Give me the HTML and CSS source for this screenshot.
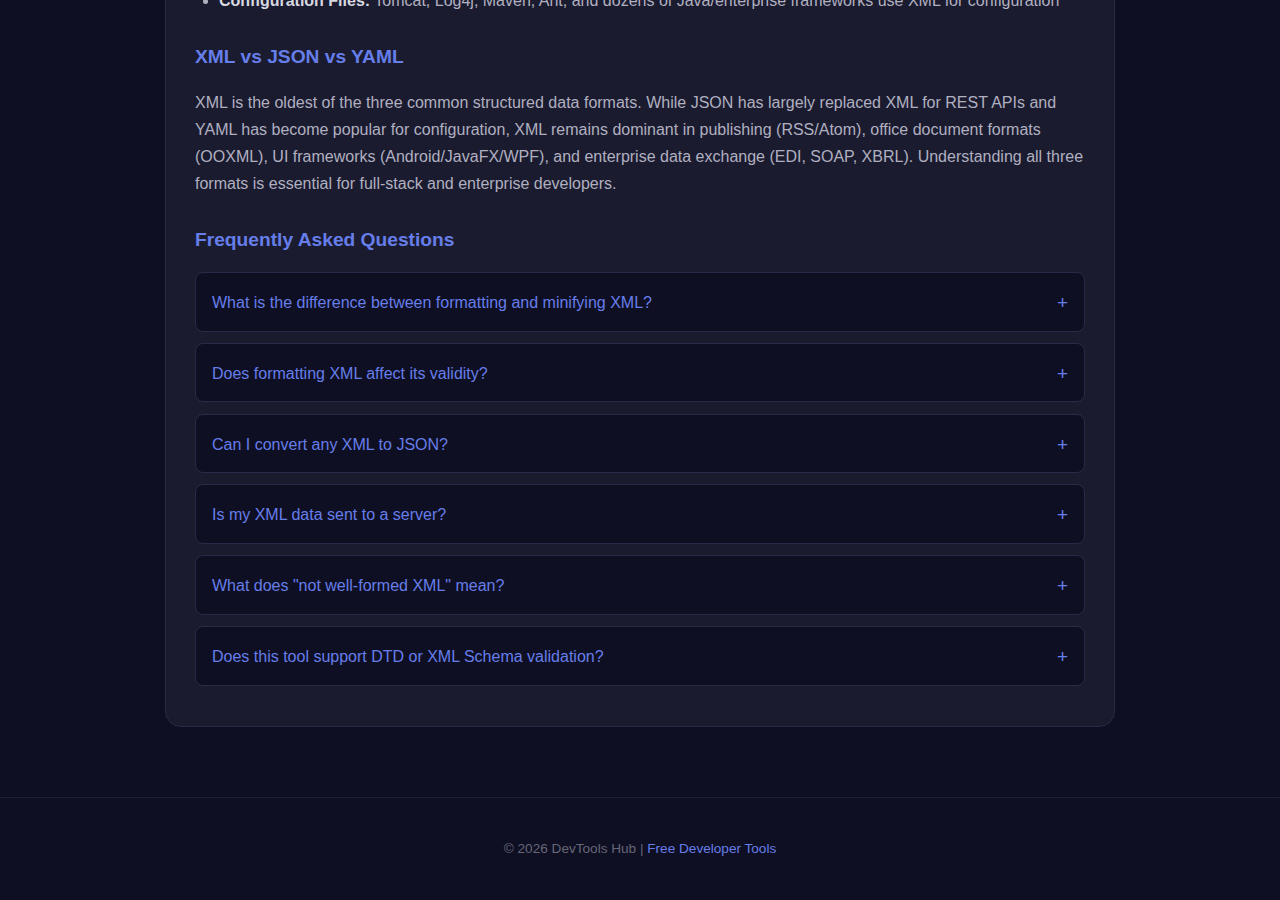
FILE: index.html
```
<!DOCTYPE html>
<html lang="en">
<head>
  <meta charset="UTF-8" />
  <meta name="viewport" content="width=device-width, initial-scale=1" />
  <title>XML Formatter - DevTools Hub</title>
  <link rel="stylesheet" href="styles.css">
</head>
<body>

  <main class="page">
    <section class="content-card">
      <ul class="uses">
        <li><strong>Configuration Files:</strong> Tomcat, Log4j, Maven, Ant, and dozens of Java/enterprise frameworks use XML for configuration</li>
      </ul>

      <h2>XML vs JSON vs YAML</h2>
      <p>XML is the oldest of the three common structured data formats. While JSON has largely replaced XML for REST APIs and YAML has become popular for configuration, XML remains dominant in publishing (RSS/Atom), office document formats (OOXML), UI frameworks (Android/JavaFX/WPF), and enterprise data exchange (EDI, SOAP, XBRL). Understanding all three formats is essential for full-stack and enterprise developers.</p>

      <h2>Frequently Asked Questions</h2>
      <div class="faq-list">
        <div class="faq-item">
          <span class="faq-question">What is the difference between formatting and minifying XML?</span>
          <span class="faq-toggle">+</span>
        </div>
        <div class="faq-item">
          <span class="faq-question">Does formatting XML affect its validity?</span>
          <span class="faq-toggle">+</span>
        </div>
        <div class="faq-item">
          <span class="faq-question">Can I convert any XML to JSON?</span>
          <span class="faq-toggle">+</span>
        </div>
        <div class="faq-item">
          <span class="faq-question">Is my XML data sent to a server?</span>
          <span class="faq-toggle">+</span>
        </div>
        <div class="faq-item">
          <span class="faq-question">What does "not well-formed XML" mean?</span>
          <span class="faq-toggle">+</span>
        </div>
        <div class="faq-item">
          <span class="faq-question">Does this tool support DTD or XML Schema validation?</span>
          <span class="faq-toggle">+</span>
        </div>
      </div>
    </section>
  </main>

  <footer>
    <p>&copy; 2026 DevTools Hub | <a href="index.html">Free Developer Tools</a></p>
  </footer>

</body>
</html>
```
FILE: styles.css
```
* {
  box-sizing: border-box;
  margin: 0;
  padding: 0;
}

body {
  font-family: 'Liberation Sans', Arial, sans-serif;
  background-color: #0f0f23;
  color: #b0b0c0;
}

.page {
  margin-top: -44px;
  padding: 0 0 70px;
}

.content-card {
  max-width: 950px;
  margin: 0 auto;
  background-color: #1b1b2f;
  border: 1px solid #2a2a48;
  border-radius: 16px;
  padding: 30px 29px 40px;
}

.uses {
  list-style: disc;
  padding-left: 24px;
  margin-bottom: 16px;
}

.uses li {
  font-size: 16px;
  line-height: 27px;
}

.uses strong {
  color: #d8d8e0;
}

h2 {
  color: #667eea;
  font-size: 19.2px;
  line-height: 22px;
  margin: 32px 0 21px;
}

p {
  font-size: 16px;
  line-height: 27px;
  margin-bottom: 16px;
}

.faq-list {
  display: flex;
  flex-direction: column;
  gap: 11.2px;
}

.faq-item {
  display: flex;
  justify-content: space-between;
  align-items: center;
  background-color: #0f0f23;
  border: 1px solid #2a2a48;
  border-radius: 8px;
  padding: 21px 16px 19px;
  color: #667eea;
  font-size: 16px;
  line-height: 17.6px;
  cursor: pointer;
}

.faq-toggle {
  font-size: 19px;
}

footer {
  border-top: 1px solid #1f1f38;
  text-align: center;
  padding: 43px 0 40px;
}

footer p {
  font-size: 13.6px;
  line-height: 15px;
  color: #666677;
  margin: 0;
}

footer a {
  color: #667eea;
  text-decoration: none;
}
```
